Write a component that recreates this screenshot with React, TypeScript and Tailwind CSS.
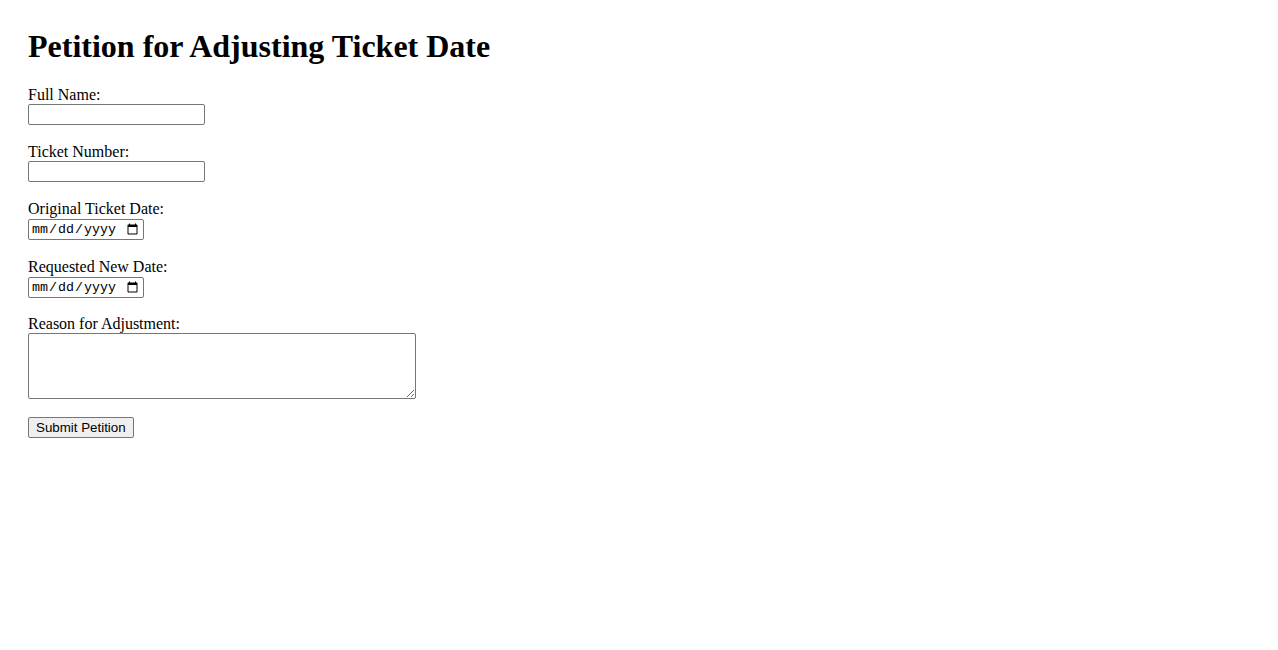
import React from "react";

export default function App() {
  const inputCls =
    "block w-[177px] h-[21px] border border-[#767676] rounded-[2px] px-[2px] bg-white text-[13.33px] font-['Liberation_Sans',Arial,sans-serif]";
  const dateCls =
    "block mt-[1px] w-[116px] h-[21px] border border-[#767676] rounded-[2px] pl-[2px] pr-[2px] bg-white text-[13.33px] font-['Liberation_Mono',monospace]";
  return (
    <div className="min-h-screen bg-white px-[28px] pt-[28px] text-[16px] text-black font-['Liberation_Serif','Times_New_Roman',serif]">
      <h1 className="text-[32px] font-bold leading-[37px] mb-[21px]">
        Petition for Adjusting Ticket Date
      </h1>
      <form onSubmit={(e) => e.preventDefault()}>
        <div className="mb-[18px]">
          <label htmlFor="name" className="block leading-[18px]">Full Name:</label>
          <input id="name" type="text" className={inputCls} />
        </div>
        <div className="mb-[18px]">
          <label htmlFor="ticket" className="block leading-[18px]">Ticket Number:</label>
          <input id="ticket" type="text" className={inputCls} />
        </div>
        <div className="mb-[18px]">
          <label htmlFor="orig" className="block leading-[18px]">Original Ticket Date:</label>
          <input id="orig" type="date" className={dateCls} />
        </div>
        <div className="mb-[17px]">
          <label htmlFor="req" className="block leading-[18px]">Requested New Date:</label>
          <input id="req" type="date" className={dateCls} />
        </div>
        <div className="mb-[16px]">
          <label htmlFor="reason" className="block leading-[18px]">Reason for Adjustment:</label>
          <textarea
            id="reason"
            className="block w-[388px] h-[66px] border border-[#767676] rounded-[2px] p-[2px] bg-white resize text-[13.33px] font-['Liberation_Mono',monospace]"
          />
        </div>
        <button
          type="submit"
          className="h-[21px] px-[7px] border border-[#767676] rounded-[2px] bg-[#efefef] text-[13.33px] leading-[15px] font-['Liberation_Sans',Arial,sans-serif]"
        >
          Submit Petition
        </button>
      </form>
    </div>
  );
}
